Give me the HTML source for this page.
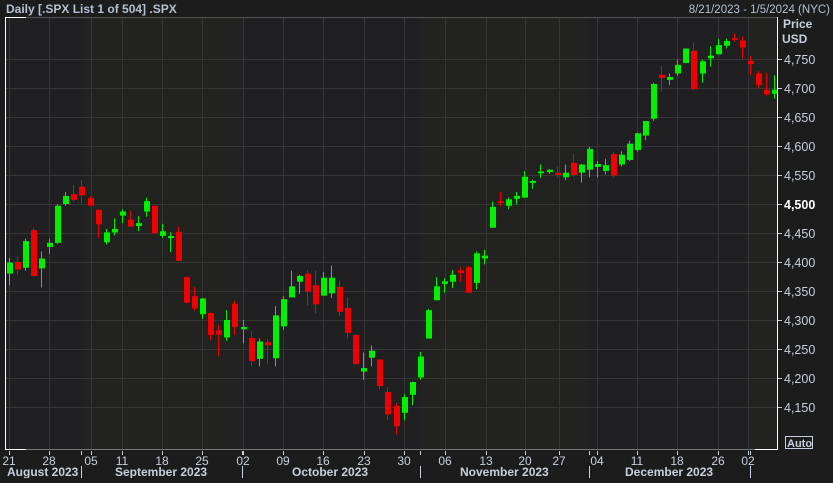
<!DOCTYPE html>
<html><head><meta charset="utf-8">
<style>
html,body{margin:0;padding:0;background:#1c1c1c;}
body{width:833px;height:478px;overflow:hidden;font-family:"Liberation Sans",sans-serif;}
svg text{font-family:"Liberation Sans",sans-serif;}
</style></head><body>
<svg id="s" width="833" height="478" xmlns="http://www.w3.org/2000/svg">
<rect x="0" y="0" width="833" height="478" fill="#1c1c1c"/>
<rect x="5" y="17" width="773" height="432" fill="#202022"/>
<rect x="84" y="17" width="158" height="432" fill="#222320"/>
<rect x="421" y="17" width="168" height="432" fill="#222320"/>
<rect x="750" y="17" width="28" height="432" fill="#222320"/>
<g id="grid"></g>
<g id="candles"></g>
<line x1="5.5" y1="17" x2="5.5" y2="449" stroke="#fff" stroke-width="1"/>
<line x1="5" y1="17.5" x2="26" y2="17.5" stroke="#fff"/>
<line x1="26" y1="17.5" x2="778" y2="17.5" stroke="#555"/>
<line x1="5" y1="449.5" x2="26" y2="449.5" stroke="#fff"/>
<line x1="26" y1="449.5" x2="755" y2="449.5" stroke="#777"/>
<line x1="755" y1="449.5" x2="778" y2="449.5" stroke="#fff"/>
<line x1="777.5" y1="17" x2="777.5" y2="450" stroke="#fff"/>
<text x="6" y="13" font-size="12" font-weight="bold" fill="#b4c0d2">Daily [.SPX List 1 of 504] .SPX</text>
<text x="830" y="13" font-size="11.5" fill="#b4c0d2" text-anchor="end">8/21/2023 - 1/5/2024 (NYC)</text>
<text x="783" y="28" font-size="12" font-weight="bold" fill="#c8d0dc">Price</text>
<text x="782" y="43" font-size="12" font-weight="bold" fill="#c8d0dc">USD</text>
<g id="yax"></g>
<rect x="785.5" y="436.5" width="27" height="12" fill="none" stroke="#c8d0dc"/>
<text x="787" y="447" font-size="11" font-weight="bold" fill="#c8d0dc">Auto</text>
<g id="xax"></g>
</svg>
<script>
var NS="http://www.w3.org/2000/svg";
function el(p,t,a,txt){var e=document.createElementNS(NS,t);for(var k in a)e.setAttribute(k,a[k]);if(txt)e.textContent=txt;document.getElementById(p).appendChild(e);return e;}
function Y(p){return 204-(p-4500)*0.58;}
for(var p=4150;p<=4750;p+=50){var y=Math.round(Y(p))+0.5;
el("grid","line",{x1:5,y1:y,x2:777,y2:y,stroke:"#363636"});
el("yax","line",{x1:778,y1:y,x2:782,y2:y,stroke:"#c8d0dc"});
var s=String(p);s=s[0]+","+s.slice(1);
el("yax","text",{x:784,y:y+4.5,"font-size":12.5,fill:p==4500?"#ffffff":"#c8d0dc","font-weight":p==4500?"bold":"normal"},s);}
var tk=[[9,"21"],[49,"28"],[91,"05"],[122,"11"],[162,"18"],[202,"25"],[243,"02"],[283,"09"],[323,"16"],[364,"23"],[404,"30"],[445,"06"],[486,"13"],[525,"20"],[559,"27"],[597,"04"],[637,"11"],[677,"18"],[718,"26"],[748,"02"]];
tk.forEach(function(t){var x=t[0]+0.5;el("grid","line",{x1:x,y1:18,x2:x,y2:449,stroke:"#363636"});
el("xax","line",{x1:x,y1:451,x2:x,y2:455,stroke:"#c8d0dc"});
el("xax","text",{x:t[0],y:465,"font-size":12,fill:"#c8d0dc","text-anchor":"middle"},t[1]);});
[81.5,242.5,420.5,589.5,750.5].forEach(function(x){el("xax","line",{x1:x,y1:451,x2:x,y2:455,stroke:"#c8d0dc"});el("xax","line",{x1:x,y1:466,x2:x,y2:478,stroke:"#c8d0dc"});});
[[7,"August 2023"],[115,"September 2023"],[292,"October 2023"],[460,"November 2023"],[625,"December 2023"]].forEach(function(m){
el("xax","text",{x:m[0],y:476,"font-size":12,"font-weight":"bold",fill:"#c8d0dc"},m[1]);});
var d=[[4380,4407,4360,4399],[4400,4410,4378,4387],[4390,4440,4385,4436],[4455,4458,4375,4376],[4389,4418,4356,4406],
[4426,4440,4414,4433],[4433,4500,4431,4497],[4500,4521,4497,4514],[4517,4533,4504,4507],[4530,4541,4501,4515],
[4510,4514,4497,4497],[4490,4490,4442,4465],[4434,4457,4430,4451],[4451,4475,4446,4457],
[4480,4491,4467,4487],[4473,4488,4461,4461],[4462,4479,4453,4467],[4487,4511,4478,4505],[4497,4497,4448,4450],
[4445,4466,4442,4453],[4443,4451,4417,4443],[4452,4461,4402,4402],[4374,4375,4329,4330],[4341,4357,4316,4320],
[4310,4338,4302,4337],[4312,4313,4265,4274],[4282,4292,4238,4275],[4270,4317,4264,4300],[4328,4333,4274,4288],
[4284,4300,4260,4288],[4269,4281,4220,4229],[4233,4268,4220,4263],[4260,4267,4225,4258],[4234,4324,4220,4308],
[4289,4341,4283,4336],[4339,4385,4339,4358],[4366,4378,4345,4376],[4380,4386,4325,4349],[4360,4385,4311,4327],
[4342,4383,4342,4373],[4346,4394,4338,4373],[4357,4368,4307,4314],[4321,4339,4268,4278],[4274,4276,4223,4224],
[4211,4244,4197,4217],[4235,4256,4220,4247],[4232,4232,4181,4186],[4176,4184,4128,4137],[4152,4157,4103,4117],
[4140,4172,4127,4167],[4171,4194,4153,4193],[4201,4245,4197,4237],[4268,4319,4268,4317],[4334,4374,4334,4358],
[4364,4372,4347,4365],[4366,4386,4355,4378],[4384,4391,4366,4383],[4391,4393,4347,4347],[4364,4418,4353,4415],
[4406,4421,4396,4411],[4459,4504,4459,4495],[4505,4521,4496,4502],[4497,4511,4491,4508],[4509,4521,4499,4514],
[4511,4557,4511,4547],[4538,4542,4526,4538],[4553,4568,4545,4556],[4555,4560,4552,4559],
[4554,4564,4546,4550],[4546,4568,4541,4554],[4571,4587,4547,4550],[4554,4569,4537,4568],[4559,4599,4546,4595],
[4564,4574,4546,4569],[4557,4578,4551,4567],[4586,4590,4546,4549],[4568,4591,4565,4585],[4576,4609,4574,4604],
[4593,4623,4590,4622],[4618,4643,4610,4643],[4647,4709,4643,4707],[4721,4738,4694,4719],[4714,4725,4705,4719],
[4725,4749,4721,4740],[4743,4768,4743,4768],[4764,4778,4697,4698],[4725,4749,4709,4746],[4753,4772,4737,4754],
[4758,4785,4758,4774],[4773,4785,4768,4781],[4786,4794,4780,4783],[4782,4789,4751,4770],
[4745,4755,4722,4743],[4725,4729,4699,4705],[4697,4726,4687,4689],[4690,4722,4682,4697]];
var step=(774-9)/(d.length-1);
d.forEach(function(c,i){var x=9+i*step;
var up=c[3]>=c[0],col=up?"#00f000":"#f00000";
var cx=Math.round(x)+0.5;
el("candles","line",{x1:cx,y1:Y(c[1]),x2:cx,y2:Y(c[2]),stroke:col,"stroke-width":1});
var t=Y(Math.max(c[0],c[3])),b=Y(Math.min(c[0],c[3]));if(b-t<1.5){t-=1;b+=1;}
el("candles","rect",{x:Math.round(x)-2,y:t,width:6,height:b-t,fill:col});});
</script>
</body></html>
